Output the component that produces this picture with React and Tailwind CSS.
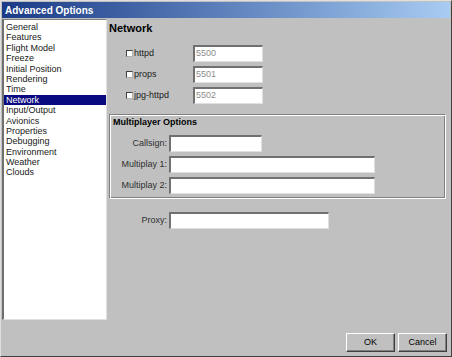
import React from "react";

const items = ["General","Features","Flight Model","Freeze","Initial Position","Rendering","Time","Network","Input/Output","Avionics","Properties","Debugging","Environment","Weather","Clouds"];

function Field({ w, value }) {
  return (
    <div className={`h-[17px] ${w} bg-white border-t-2 border-l-2 border-b border-r border-t-[#707070] border-l-[#707070] border-b-[#e0e0e0] border-r-[#e0e0e0] text-[9px] leading-[13px] pl-[1px] text-[#8c8c8c]`}>{value}</div>
  );
}

function Check({ label }) {
  return (
    <div className="flex items-center w-[67px]">
      <div className="w-[7px] h-[7px] bg-white border-t border-l border-[#404040] border-b border-r border-b-[#b0b0b0] border-r-[#b0b0b0]" />
      <span className="ml-[1px] text-[9px] text-[#202020]">{label}</span>
    </div>
  );
}

function Label({ children }) {
  return <span className="w-[59px] text-right pr-[2px] text-[9px] text-[#303030]">{children}</span>;
}

function Btn({ children }) {
  return (
    <div className="w-[49px] h-[19px] flex items-center justify-center text-[9px] text-black border border-t-white border-l-white border-b-[#404040] border-r-[#404040] shadow-[inset_-1px_-1px_0_#808080]">{children}</div>
  );
}

export default function App() {
  return (
    <div className="w-[452px] h-[357px] bg-[#c0c0c0] flex flex-col border border-t-[#e0e0e0] border-l-[#e0e0e0] border-b-[#404040] border-r-[#404040] overflow-hidden" style={{ fontFamily: '"Liberation Sans", Arial, sans-serif' }}>
      <div className="mx-[1px] mt-[1px] h-[16px] bg-gradient-to-r from-[#1c3a86] to-[#a8ccf2] flex items-center pl-[3px] text-white font-bold text-[10px]">Advanced Options</div>
      <div className="flex flex-1">
        <div className="ml-[1px] mt-[1px] w-[105px] h-[301px] bg-white border-t border-l-2 border-t-[#808080] border-l-[#707070] border-b border-r border-b-[#e0e0e0] border-r-[#e0e0e0] pt-[2px]">
          {items.map((it) => (
            <div key={it} className={`h-[10.4px] leading-[10.4px] text-[9px] pl-[2px] ${it === "Network" ? "bg-[#0a0a80] text-white" : "text-[#202020]"}`}>{it}</div>
          ))}
        </div>
        <div className="flex-1 flex flex-col pl-[2px]">
          <div className="text-[11px] font-bold text-black mt-[3px] leading-[14px]">Network</div>
          <div className="flex flex-col gap-[4px] ml-[17px] mt-[10px]">
            <div className="flex items-center"><Check label="httpd" /><Field w="w-[70px]" value="5500" /></div>
            <div className="flex items-center"><Check label="props" /><Field w="w-[70px]" value="5501" /></div>
            <div className="flex items-center"><Check label="jpg-httpd" /><Field w="w-[70px]" value="5502" /></div>
          </div>
          <div className="mt-[10px] w-[337px] h-[85px] border border-t-[#808080] border-l-[#808080] border-b-white border-r-white shadow-[inset_1px_1px_0_#ffffff,inset_-1px_-1px_0_#808080] pt-[2px]">
            <div className="text-[9px] font-bold text-black leading-[11px] pl-[3px]">Multiplayer Options</div>
            <div className="flex flex-col gap-[4px] mt-[7px]">
              <div className="flex items-center"><Label>Callsign:</Label><Field w="w-[93px]" value="" /></div>
              <div className="flex items-center"><Label>Multiplay 1:</Label><Field w="w-[206px]" value="" /></div>
              <div className="flex items-center"><Label>Multiplay 2:</Label><Field w="w-[206px]" value="" /></div>
            </div>
          </div>
          <div className="flex items-center mt-[13px] pl-[1px]">
            <Label>Proxy:</Label><Field w="w-[160px]" value="" />
          </div>
          <div className="flex-1" />
          <div className="flex justify-end gap-[3px] pr-[4px] mb-[4px]">
            <Btn>OK</Btn>
            <Btn>Cancel</Btn>
          </div>
        </div>
      </div>
    </div>
  );
}
